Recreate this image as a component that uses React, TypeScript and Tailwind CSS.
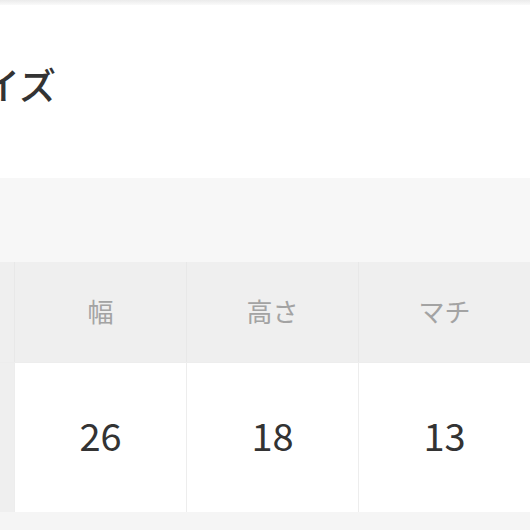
export default function App() {
  const cols = [
    { label: '幅', value: '26' },
    { label: '高さ', value: '18' },
    { label: 'マチ', value: '13' },
  ];

  return (
    <div className="w-[530px] h-[530px] overflow-hidden bg-white" style={{ fontFamily: '"Noto Sans CJK JP", "Noto Sans", sans-serif' }}>
      {/* top edge of previous section */}
      <div className="h-[5px] bg-gradient-to-b from-[#ebebeb] to-[#fafafa]" />

      {/* shifted content, page is scrolled sideways */}
      <div className="-ml-[158px] w-[860px]">
        <div className="h-[173px] pt-[61px] pl-[104px]">
          <h2 className="text-[37px] leading-[37px] font-medium text-[#333]">サイズ</h2>
        </div>

        <div className="h-[84px] bg-[#f7f7f7]" />

        <div className="grid grid-cols-[172px_171px_171px_171px] gap-x-px bg-[#e8e8e8]">
          <div className="h-[100px] bg-[#efefef]" />
          {cols.map((c) => (
            <div key={c.label} className="h-[100px] pb-[3px] bg-[#efefef] flex items-center justify-center text-[26px] text-[#a3a3a3]">
              {c.label}
            </div>
          ))}
        </div>

        <div className="grid grid-cols-[172px_171px_171px_171px] gap-x-px bg-[#ededed] pt-px">
          <div className="h-[149px] bg-[#efefef]" />
          {cols.map((c) => (
            <div key={c.label} className="h-[149px] pb-[6px] bg-white flex items-center justify-center text-[38px] text-[#333]">
              {c.value}
            </div>
          ))}
        </div>

        <div className="h-[20px] bg-[#f5f5f5]" />
      </div>
    </div>
  );
}
